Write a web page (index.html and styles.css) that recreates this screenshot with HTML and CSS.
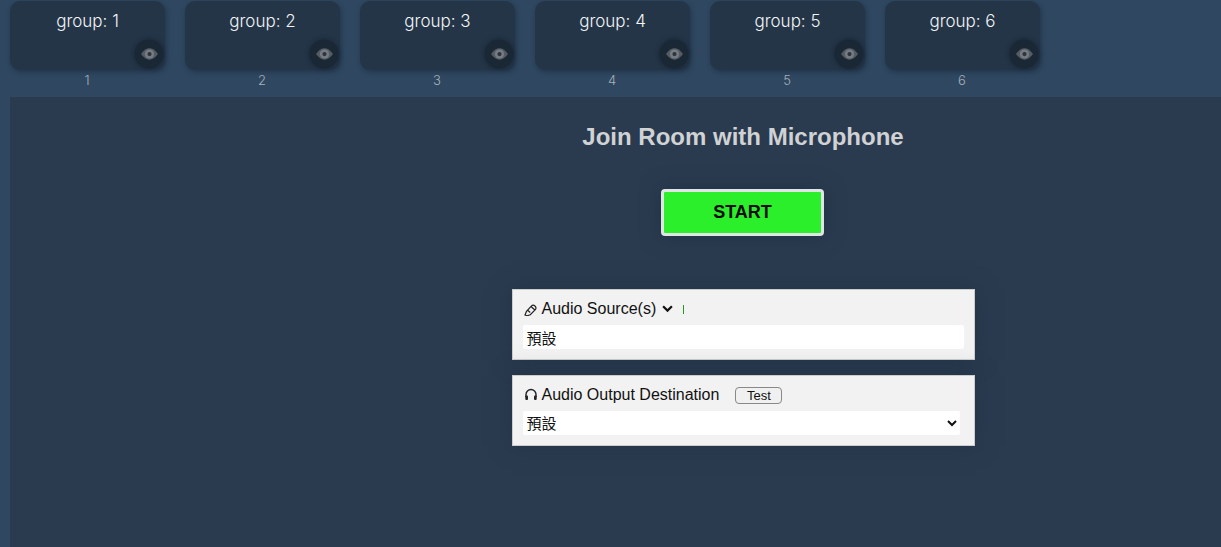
FILE: index.html
```html
<!DOCTYPE html>
<html lang="en">
<head>
  <meta charset="UTF-8">
  <title>Join Room with Microphone</title>
  <link rel="stylesheet" href="styles.css">
</head>
<body>
  <svg class="sprites" width="0" height="0">
    <symbol id="eye" viewBox="0 0 24 16">
      <path d="M0 8C4 2.500 8 0 12 0s8 2.500 12 8c-4 5.500-8 8-12 8S4 13.500 0 8z" fill="#565c64"/>
      <circle cx="12" cy="8" r="6.500" fill="#777c83"/>
      <circle cx="12" cy="8" r="3" fill="#2b3542"/>
    </symbol>
  </svg>

  <div class="scenes">
    <div class="scene">
      <div class="card">group: 1<span class="eye"><svg width="17" height="12"><use href="#eye"/></svg></span></div>
      <div class="num">1</div>
    </div>
    <div class="scene">
      <div class="card">group: 2<span class="eye"><svg width="17" height="12"><use href="#eye"/></svg></span></div>
      <div class="num">2</div>
    </div>
    <div class="scene">
      <div class="card">group: 3<span class="eye"><svg width="17" height="12"><use href="#eye"/></svg></span></div>
      <div class="num">3</div>
    </div>
    <div class="scene">
      <div class="card">group: 4<span class="eye"><svg width="17" height="12"><use href="#eye"/></svg></span></div>
      <div class="num">4</div>
    </div>
    <div class="scene">
      <div class="card">group: 5<span class="eye"><svg width="17" height="12"><use href="#eye"/></svg></span></div>
      <div class="num">5</div>
    </div>
    <div class="scene">
      <div class="card">group: 6<span class="eye"><svg width="17" height="12"><use href="#eye"/></svg></span></div>
      <div class="num">6</div>
    </div>
  </div>

  <div class="main">
    <h2>Join Room with Microphone</h2>
    <button class="start" type="button">START</button>

    <div class="panel panel-source">
      <div class="panel-head">
        <svg class="icon" viewBox="0 0 14 14" width="14" height="14"><path d="M1 13l1.500-3.700 4.800-5.200a2.700 2.700 0 0 1 4 3.600l-5 5-3.200 1.100-2.100-.8z M7 4.500l3.600 3.200 M4 8.500l2.200 2" fill="none" stroke="#222" stroke-width="1.200"/></svg>
        <span>Audio Source(s)</span>
        <svg class="chevron" viewBox="0 0 10 7" width="11" height="8"><path d="M1 1l4 4 4-4" fill="none" stroke="#111" stroke-width="2"/></svg>
        <span class="meter"></span>
      </div>
      <div class="source-list">預設</div>
    </div>

    <div class="panel panel-output">
      <div class="panel-head">
        <svg class="icon" viewBox="0 0 14 14" width="14" height="14"><path d="M2 9V6.500a5 5 0 0 1 10 0V9" fill="none" stroke="#222" stroke-width="1.400"/><rect x="1.300" y="7.500" width="2.700" height="4.500" rx="1" fill="#222"/><rect x="10" y="7.500" width="2.700" height="4.500" rx="1" fill="#222"/></svg>
        <span>Audio Output Destination</span>
        <button class="test" type="button">Test</button>
      </div>
      <select class="output-select">
        <option>預設</option>
      </select>
    </div>
  </div>
</body>
</html>
```

FILE: styles.css
```css
* {
  box-sizing: border-box;
}

html, body {
  height: 100%;
}

body {
  margin: 0;
  overflow: hidden;
  display: flex;
  flex-direction: column;
  background: #2f4760;
  font-family: 'Liberation Sans', Arial, sans-serif;
}

.sprites {
  display: none;
}

.scenes {
  height: 97px;
  flex-shrink: 0;
  display: flex;
  gap: 20px;
  padding: 1px 0 0 10px;
}

.scene {
  width: 155px;
}

.card {
  position: relative;
  height: 69px;
  padding-top: 10px;
  background: #243548;
  border-radius: 10px;
  box-shadow: 1px 2px 5px rgba(10, 20, 35, 0.35);
  color: #f2f4f6;
  font-family: Inter, sans-serif;
  font-size: 17px;
  font-weight: 300;
  line-height: 20px;
  text-align: center;
}

.eye {
  position: absolute;
  right: 2px;
  bottom: 2px;
  width: 28px;
  height: 28px;
  border-radius: 50%;
  background: #1a2735;
  box-shadow: 0 0 5px rgba(15, 25, 35, 0.8);
  display: flex;
  align-items: center;
  justify-content: center;
}

.num {
  margin-top: 3px;
  padding-right: 1px;
  color: #a6b0bb;
  font-family: Inter, sans-serif;
  font-size: 13px;
  font-weight: 300;
  line-height: 15px;
  text-align: center;
}

.main {
  flex: 1;
  margin-left: 10px;
  padding-left: 255px;
  background: #2a3b50;
  display: flex;
  flex-direction: column;
  align-items: center;
}

h2 {
  margin: 25px 0 0;
  color: #d0d2d4;
  font-size: 24px;
  line-height: 29px;
  font-weight: bold;
}

.start {
  width: 163px;
  height: 47px;
  margin: 38px 1px 0 0;
  background: #2bef2b;
  border: 3px solid #dfe5e5;
  border-radius: 4px;
  box-shadow: 0 0 20px rgba(30, 45, 60, 0.6);
  color: #0a0a0a;
  font-family: inherit;
  font-size: 18px;
  font-weight: bold;
}

.panel {
  width: 463px;
  padding: 10px 10px 9px;
  background: #f2f2f2;
  border: 1px solid #ccc;
  box-shadow: 0 0 20px rgba(30, 45, 60, 0.5);
}

.panel-source {
  height: 71px;
  margin-top: 53px;
}

.panel-output {
  height: 71px;
  margin-top: 15px;
}

.panel-head {
  height: 18px;
  display: flex;
  align-items: center;
  color: #111;
  font-size: 16px;
  line-height: 18px;
}

.icon {
  margin: 0 4px 0 1px;
}

.chevron {
  margin-left: 6px;
}

.meter {
  width: 1px;
  height: 9px;
  margin-left: 10px;
  background: #1f9a1f;
}

.source-list {
  width: 441px;
  height: 24px;
  margin-top: 7px;
  padding: 3px 0 0 4px;
  background: #fff;
  border-radius: 2px;
  color: #111;
  font-family: 'Liberation Sans', 'Noto Sans CJK TC', sans-serif;
  font-size: 15px;
  line-height: 21px;
}

.test {
  width: 47px;
  height: 17px;
  margin-left: 16px;
  padding: 0;
  background: #f0f0f0;
  border: 1px solid #888;
  border-radius: 4px;
  color: #111;
  font-family: inherit;
  font-size: 13px;
  line-height: 15px;
}

.output-select {
  display: block;
  width: 437px;
  height: 24px;
  margin-top: 7px;
  padding-left: 0;
  background: #fff;
  border: 0;
  border-radius: 2px;
  color: #111;
  font-family: 'Liberation Sans', 'Noto Sans CJK TC', sans-serif;
  font-size: 15px;
}
```
